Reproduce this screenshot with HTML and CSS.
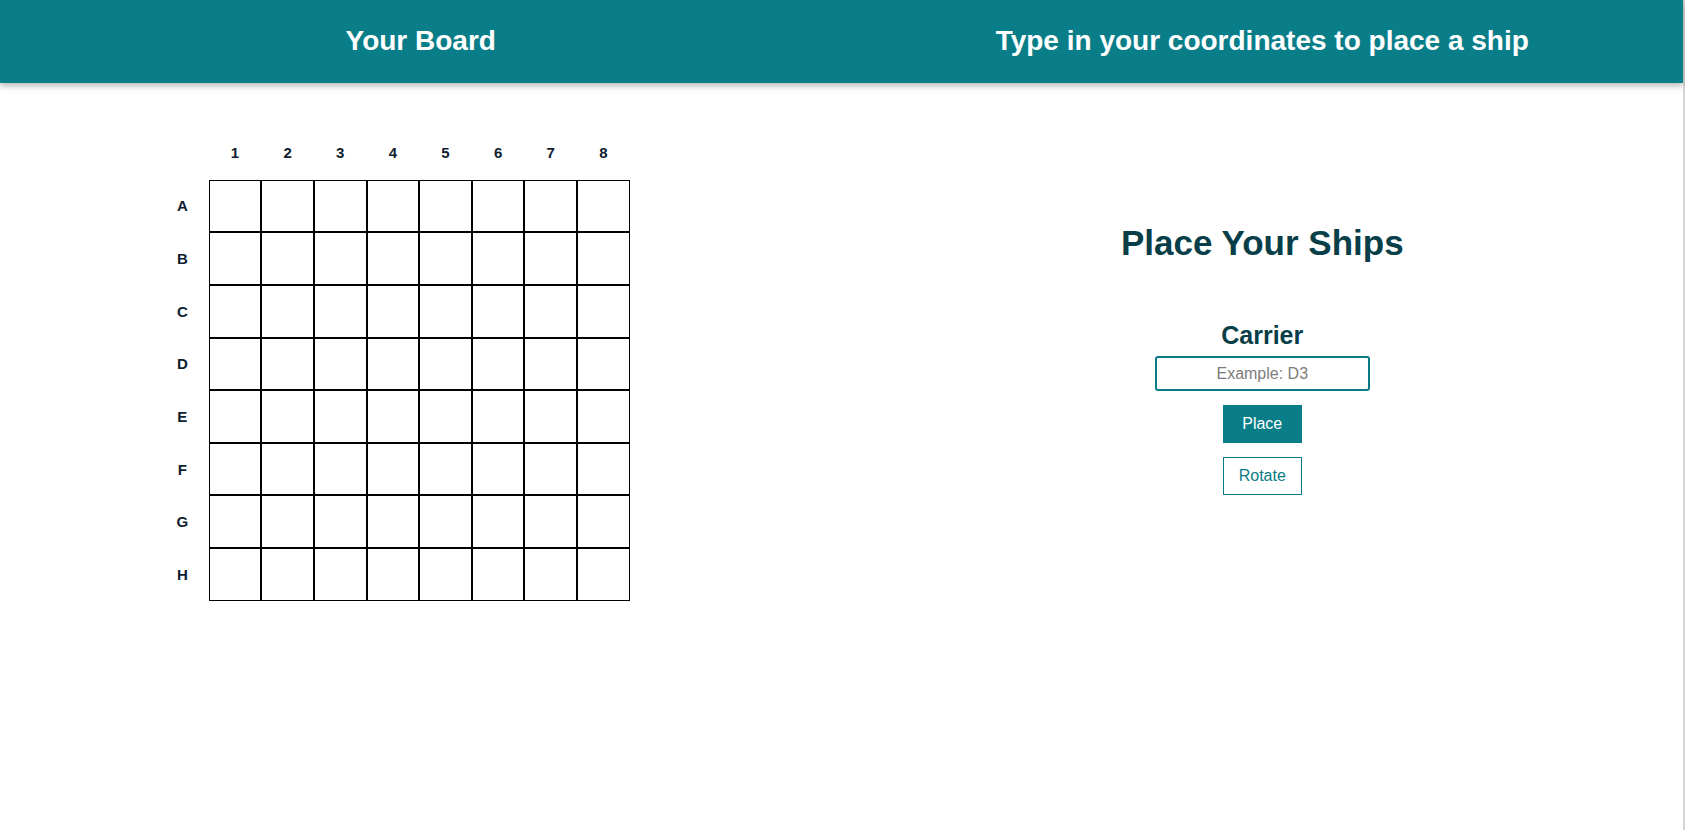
FILE: index.html
```html
<!DOCTYPE html>
<html lang="en">
<head>
<meta charset="utf-8">
<title>Battleship - Place Your Ships</title>
<link rel="stylesheet" href="styles.css">
</head>
<body>
<div class="app">
  <header class="topbar">
    <div class="topbar-half"><h1 class="topbar-title">Your Board</h1></div>
    <div class="topbar-half"><h1 class="topbar-title">Type in your coordinates to place a ship</h1></div>
  </header>
  <main class="content">
    <section class="board-pane">
      <div class="board">
        <div class="label col-label"></div>
        <div class="label col-label">1</div><div class="label col-label">2</div><div class="label col-label">3</div><div class="label col-label">4</div>
        <div class="label col-label">5</div><div class="label col-label">6</div><div class="label col-label">7</div><div class="label col-label">8</div>

        <div class="label">A</div>
        <div class="cell"></div><div class="cell"></div><div class="cell"></div><div class="cell"></div><div class="cell"></div><div class="cell"></div><div class="cell"></div><div class="cell"></div>
        <div class="label">B</div>
        <div class="cell"></div><div class="cell"></div><div class="cell"></div><div class="cell"></div><div class="cell"></div><div class="cell"></div><div class="cell"></div><div class="cell"></div>
        <div class="label">C</div>
        <div class="cell"></div><div class="cell"></div><div class="cell"></div><div class="cell"></div><div class="cell"></div><div class="cell"></div><div class="cell"></div><div class="cell"></div>
        <div class="label">D</div>
        <div class="cell"></div><div class="cell"></div><div class="cell"></div><div class="cell"></div><div class="cell"></div><div class="cell"></div><div class="cell"></div><div class="cell"></div>
        <div class="label">E</div>
        <div class="cell"></div><div class="cell"></div><div class="cell"></div><div class="cell"></div><div class="cell"></div><div class="cell"></div><div class="cell"></div><div class="cell"></div>
        <div class="label">F</div>
        <div class="cell"></div><div class="cell"></div><div class="cell"></div><div class="cell"></div><div class="cell"></div><div class="cell"></div><div class="cell"></div><div class="cell"></div>
        <div class="label">G</div>
        <div class="cell"></div><div class="cell"></div><div class="cell"></div><div class="cell"></div><div class="cell"></div><div class="cell"></div><div class="cell"></div><div class="cell"></div>
        <div class="label">H</div>
        <div class="cell"></div><div class="cell"></div><div class="cell"></div><div class="cell"></div><div class="cell"></div><div class="cell"></div><div class="cell"></div><div class="cell"></div>
      </div>
    </section>
    <section class="place-pane">
      <h2 class="place-title">Place Your Ships</h2>
      <h3 class="ship-name">Carrier</h3>
      <input class="coord-input" type="text" placeholder="Example: D3">
      <button class="btn btn-primary" type="button">Place</button>
      <button class="btn btn-outline" type="button">Rotate</button>
    </section>
  </main>
</div>
</body>
</html>
```

FILE: styles.css
```css
html, body {
  margin: 0;
  padding: 0;
  height: 100%;
}

body {
  font-family: "Liberation Sans", Arial, sans-serif;
  background: #ffffff;
}

.app {
  width: 1683px;
  min-height: 100%;
  border-right: 2px solid #d4d4d4;
}

.topbar {
  display: grid;
  grid-template-columns: 1fr 1fr;
  height: 83px;
  background: #097e89;
  box-shadow: 0 3px 6px rgba(0, 0, 0, 0.28);
  position: relative;
  z-index: 1;
}

.topbar-half {
  display: flex;
  align-items: center;
  justify-content: center;
}

.topbar-title {
  margin: 0;
  color: #ffffff;
  font-size: 28px;
  font-weight: 700;
  line-height: 1;
  padding-bottom: 1px;
}

.content {
  display: grid;
  grid-template-columns: 1fr 1fr;
}

.board-pane {
  padding: 43px 0 0 156px;
}

.board {
  display: grid;
  grid-template-columns: repeat(9, 52.625px);
  grid-template-rows: 53.625px repeat(8, 52.625px);
}

.label {
  display: flex;
  align-items: center;
  justify-content: center;
  font-size: 15px;
  font-weight: 700;
  color: #0e1d30;
}

.col-label {
  padding-bottom: 1px;
}

.cell {
  border: 1px solid #000000;
  background: #ffffff;
}

.place-pane {
  display: flex;
  flex-direction: column;
  align-items: center;
  padding-top: 140px;
}

.place-title {
  margin: 0;
  font-size: 35px;
  font-weight: 700;
  color: #073e48;
  line-height: 40px;
}

.ship-name {
  margin: 58px 0 0 0;
  font-size: 25px;
  font-weight: 700;
  color: #073e48;
  line-height: 29px;
}

.coord-input {
  margin-top: 6px;
  box-sizing: border-box;
  width: 215px;
  height: 35px;
  border: 2px solid #0b7c87;
  border-radius: 3px;
  text-align: center;
  font-family: "Liberation Sans", Arial, sans-serif;
  font-size: 16px;
  color: #222;
  outline: none;
  padding: 0 8px;
}

.coord-input::placeholder {
  color: #7d7d7d;
}

.btn {
  box-sizing: border-box;
  width: 79px;
  height: 38px;
  margin-top: 14px;
  font-family: "Liberation Sans", Arial, sans-serif;
  font-size: 16px;
  border-radius: 0;
  cursor: pointer;
}

.btn-primary {
  background: #097e89;
  color: #ffffff;
  border: 1px solid #097e89;
}

.btn-outline {
  background: #ffffff;
  color: #0b7c87;
  border: 1px solid #0b7c87;
}
```
